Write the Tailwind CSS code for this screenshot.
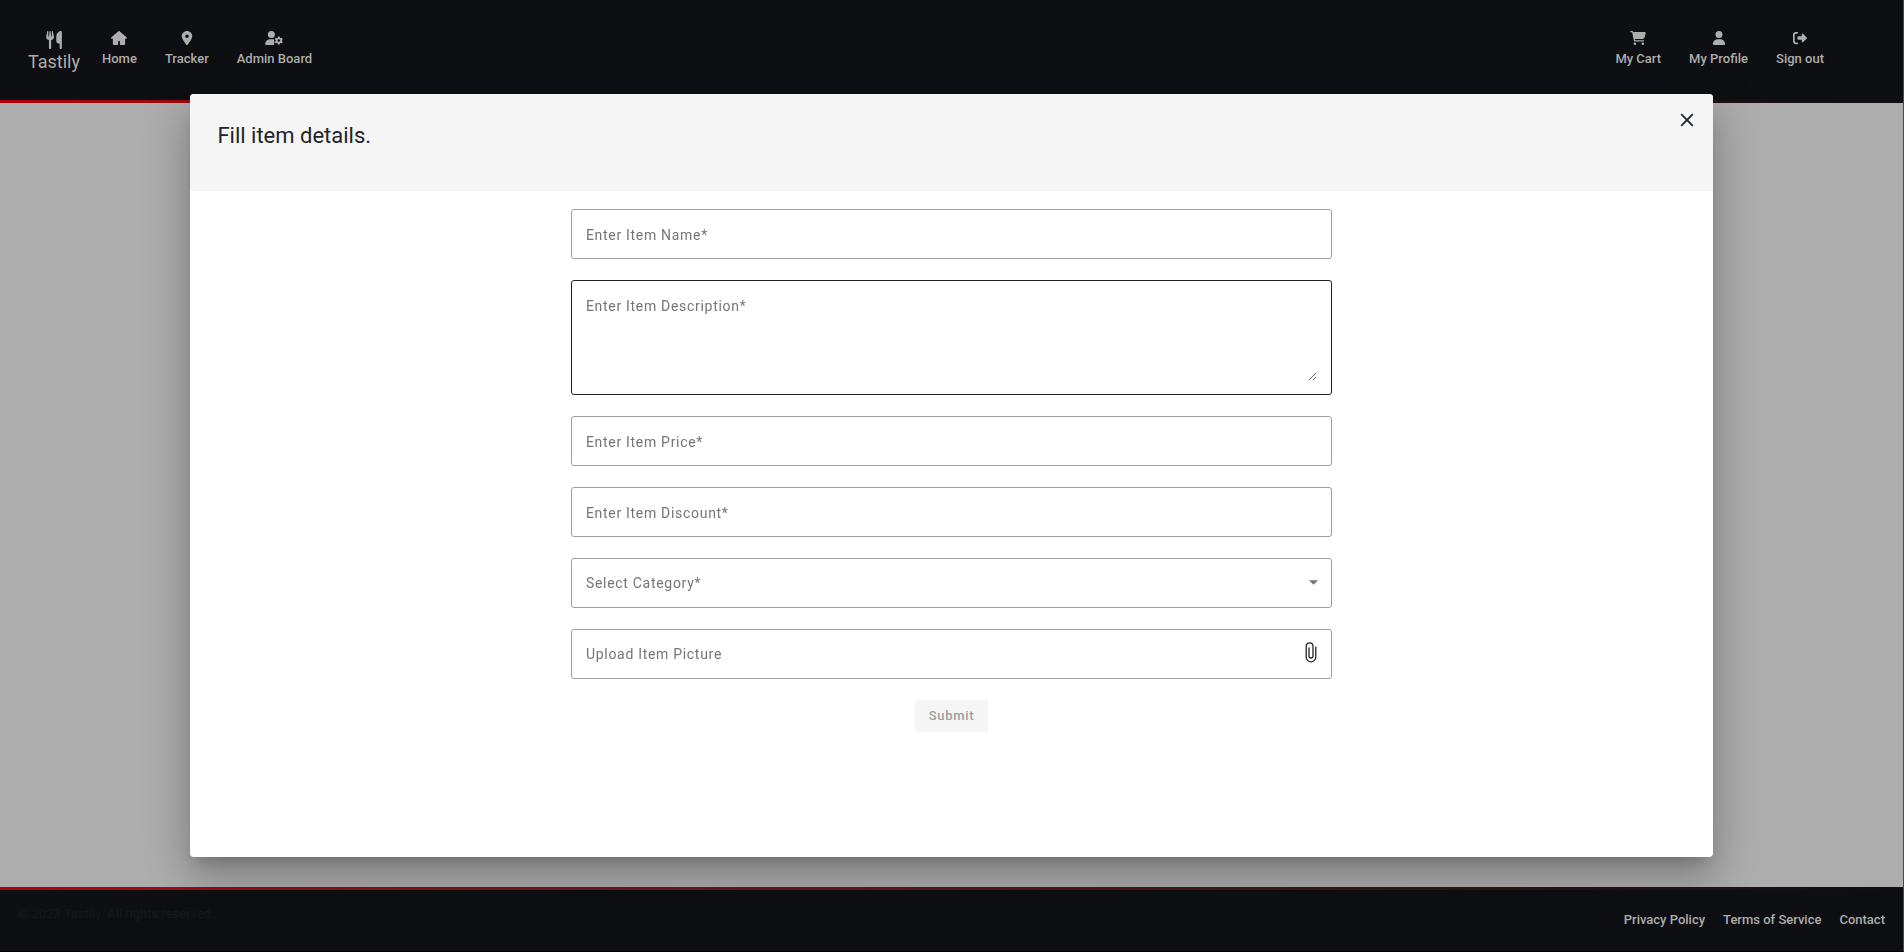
<!DOCTYPE html>
<html lang="en" class="h-full">
<head>
<meta charset="utf-8">
<meta name="viewport" content="width=device-width, initial-scale=1">
<title>Tastily</title>
<script src="https://cdn.jsdelivr.net/npm/@tailwindcss/browser@4"></script>
</head>
<body class="flex min-h-screen flex-col border-r border-b border-r-[#4a4a4a] border-b-black bg-[#adadad] font-[Roboto,sans-serif] text-[13px] font-medium text-[#adadad]">
<header>
  <nav class="flex h-[100px] items-start justify-between bg-[#0e0f12] pt-[29px] pr-[79px] pl-7" aria-label="Main">
    <div class="flex items-start">
      <a href="#" class="mr-[22px] flex flex-col items-center text-lg leading-[26px] font-normal">
        <svg class="mt-[2px] size-[18px]" viewBox="0 0 448 512" fill="currentColor" aria-hidden="true"><path d="M416 0C400 0 288 32 288 176v112c0 35.300 28.700 64 64 64h32v128c0 17.700 14.300 32 32 32s32-14.300 32-32V32c0-17.700-14.300-32-32-32zM64 16C64 7.800 57.900 1 49.700.1S34.200 4.600 32.400 12.500L2.100 148.800C.7 155.100 0 161.500 0 167.900c0 45.900 35.100 83.600 80 87.700V480c0 17.700 14.300 32 32 32s32-14.300 32-32V255.600c44.900-4.100 80-41.800 80-87.700 0-6.400-.7-12.800-2.100-19.100L191.600 12.500c-1.800-8-9.300-13.300-17.400-12.400S160 7.800 160 16v134.200c0 5.400-4.400 9.800-9.800 9.800-5.100 0-9.300-3.900-9.800-9L127.900 14.600C127.200 6.300 120.300 0 112 0s-15.200 6.300-15.900 14.600L83.700 151c-.5 5.100-4.700 9-9.800 9-5.400 0-9.800-4.400-9.800-9.800V16z"/></svg>
        <span>Tastily</span>
      </a>
      <ul class="flex gap-7">
        <li><a href="#" class="flex flex-col items-center gap-1 leading-5">
          <svg class="mt-[2px] h-[14px] w-4" viewBox="0 0 576 512" fill="currentColor" aria-hidden="true"><path d="M575.800 255.500c0 18-15 32.100-32 32.100h-32l.7 160.200c0 2.700-.2 5.400-.5 8.100V472c0 22.100-17.900 40-40 40H352c-17.700 0-32-14.300-32-32v-96c0-17.700-14.300-32-32-32s-32 14.300-32 32v96c0 17.700-14.300 32-32 32H104c-22.100 0-40-17.900-40-40V287.600H32c-18 0-32-14-32-32.100 0-9 3-17 10-24L266.400 8c7-7 15-8 22-8s15 2 21 7l255.400 224.500c8 7 12 15 11 24z"/></svg>
          <span>Home</span></a></li>
        <li><a href="#" class="flex flex-col items-center gap-1 leading-5">
          <svg class="mt-[2px] h-[14px] w-4" viewBox="0 0 384 512" fill="currentColor" aria-hidden="true"><path d="M215.700 499.200C267 435 384 279.400 384 192 384 86 298 0 192 0S0 86 0 192c0 87.400 117 243 168.300 307.200 12.300 15.300 35.100 15.300 47.400 0zM192 128a64 64 0 1 1 0 128 64 64 0 1 1 0-128z"/></svg>
          <span>Tracker</span></a></li>
        <li><a href="#" class="flex flex-col items-center gap-1 leading-5">
          <svg class="mt-[2px] h-[14px] w-[18px]" viewBox="0 0 640 512" fill="currentColor" aria-hidden="true"><path d="M224 0a128 128 0 1 1 0 256A128 128 0 1 1 224 0zM178.300 304h91.400c20.600 0 40.400 3.500 58.800 9.900-15 34-5 72 20 96-28 26-36 65-20 98l3 4H29.700C13.300 512 0 498.700 0 482.300 0 383.800 79.800 304 178.300 304z"/><path fill-rule="evenodd" d="M464 200h64l10 48 24 14 47-15 32 55-36 33v28l36 33-32 55-47-15-24 14-10 48h-64l-10-48-24-14-47 15-32-55 36-33v-28l-36-33 32-55 47 15 24-14zM496 301a48 48 0 1 0 0 96 48 48 0 1 0 0-96z"/></svg>
          <span>Admin Board</span></a></li>
      </ul>
    </div>
    <ul class="flex gap-7">
      <li><a href="#" class="flex flex-col items-center gap-1 leading-5">
        <svg class="mt-[2px] h-[14px] w-4" viewBox="0 0 576 512" fill="currentColor" aria-hidden="true"><path d="M0 24C0 10.700 10.700 0 24 0h45.500c22 0 41.500 12.800 50.600 32h411c26.300 0 45.500 25 38.600 50.400l-41 152.300c-8.500 31.400-37 53.300-69.500 53.300H170.700l5.400 28.500c2.200 11.300 12.100 19.500 23.600 19.500H488c13.300 0 24 10.700 24 24s-10.700 24-24 24H199.700c-34.600 0-64.300-24.600-70.700-58.500L77.400 54.500C76.700 50.700 73.400 48 69.500 48H24C10.700 48 0 37.300 0 24zm128 440a48 48 0 1 1 96 0 48 48 0 1 1-96 0zm336-48a48 48 0 1 1 0 96 48 48 0 1 1 0-96z"/></svg>
        <span>My Cart</span></a></li>
      <li><a href="#" class="flex flex-col items-center gap-1 leading-5">
        <svg class="mt-[2px] h-[14px] w-4" viewBox="0 0 448 512" fill="currentColor" aria-hidden="true"><path d="M224 256a128 128 0 1 0 0-256 128 128 0 1 0 0 256zm-45.700 48C79.800 304 0 383.800 0 482.300 0 498.700 13.300 512 29.700 512h388.600c16.400 0 29.700-13.300 29.700-29.700 0-98.500-79.800-178.300-178.300-178.300z"/></svg>
        <span>My Profile</span></a></li>
      <li><a href="#" class="flex flex-col items-center gap-1 leading-5">
        <svg class="mt-[2px] h-[14px] w-4" viewBox="0 0 512 512" fill="currentColor" aria-hidden="true"><path d="M502.600 278.600c12.500-12.500 12.500-32.800 0-45.300l-128-128c-9.200-9.200-22.900-11.900-34.900-6.900S320 115.100 320 128v64H192c-17.700 0-32 14.300-32 32v64c0 17.700 14.300 32 32 32h128v64c0 12.900 7.800 24.600 19.800 29.600s25.700 2.200 34.900-6.900zM160 96c17.700 0 32-14.300 32-32s-14.300-32-32-32H96C43 32 0 75 0 128v256c0 53 43 96 96 96h64c17.700 0 32-14.300 32-32s-14.300-32-32-32H96c-17.700 0-32-14.300-32-32V128c0-17.700 14.300-32 32-32z"/></svg>
        <span>Sign out</span></a></li>
    </ul>
  </nav>
  <div class="h-[3px] bg-linear-to-r from-[#ad0010] to-[#0e0f12]"></div>
</header>

<main class="flex-1"></main>

<footer>
  <div class="h-[3px] bg-linear-to-r from-[#ad0010] to-[#0e0f12]"></div>
  <div class="flex h-[61px] items-start justify-between bg-[#0e0f12] px-[18px] pt-[14px]">
    <p class="leading-5 font-normal text-[#17181c]">© 2023 Tastily. All rights reserved.</p>
    <nav class="flex gap-[18px] pt-[6px] leading-5" aria-label="Legal">
      <a href="#">Privacy Policy</a>
      <a href="#">Terms of Service</a>
      <a href="#">Contact</a>
    </nav>
  </div>
</footer>

<!-- Item dialog -->
<div class="fixed top-0 right-px bottom-px left-0 flex px-[10%] py-[94px]">
  <section role="dialog" aria-modal="true" aria-labelledby="dialog-title" class="flex w-full flex-col overflow-auto rounded-[4px] bg-white text-[#212529] shadow-[0_11px_15px_-7px_rgba(0,0,0,0.2),0_24px_38px_3px_rgba(0,0,0,0.14),0_9px_46px_8px_rgba(0,0,0,0.12)]">
    <header class="flex h-[97px] shrink-0 items-start justify-between bg-[#f5f5f5] pt-[14px] pr-[14px] pl-[27px]">
      <h1 id="dialog-title" class="pt-3 text-[22px] leading-8 font-normal">Fill item details.</h1>
      <button type="button" aria-label="Close" class="flex size-6 items-center justify-center">
        <svg class="size-[14px] shrink-0" viewBox="0 0 14 14" fill="none" stroke="currentColor" stroke-width="1.800" aria-hidden="true"><path d="M1.200 1.200l11.600 11.600M12.800 1.200L1.200 12.800"/></svg>
      </button>
    </header>
    <form class="mx-auto flex w-1/2 flex-col gap-[21px] pt-[18px] text-sm font-normal tracking-wider">
      <input aria-label="Item name" required placeholder="Enter Item Name*" class="h-[50px] rounded-[3px] border border-[#9e9e9e] px-[14px] pt-[2px] placeholder:text-[#757575]">
      <div class="flex h-[115px] rounded-[3px] border border-[#212121] px-[14px] py-[13px]">
        <textarea aria-label="Item description" required placeholder="Enter Item Description*" class="w-full resize-y leading-6 outline-none placeholder:text-[#757575]"></textarea>
      </div>
      <input aria-label="Item price" required placeholder="Enter Item Price*" class="h-[50px] rounded-[3px] border border-[#9e9e9e] px-[14px] pt-[2px] placeholder:text-[#757575]">
      <input aria-label="Item discount" required placeholder="Enter Item Discount*" class="h-[50px] rounded-[3px] border border-[#9e9e9e] px-[14px] pt-[2px] placeholder:text-[#757575]">
      <div class="relative">
        <select aria-label="Category" required class="h-[50px] w-full appearance-none rounded-[3px] border border-[#9e9e9e] px-[14px] tracking-wider text-[#757575]"><option>Select Category*</option></select>
        <svg class="pointer-events-none absolute top-[22px] right-[14px] h-[5px] w-[9px]" viewBox="0 0 10 5" fill="#757575" aria-hidden="true"><path d="M0 0h10L5 5z"/></svg>
      </div>
      <div class="flex h-[50px] items-center rounded-[3px] border border-[#9e9e9e] px-[14px]">
        <input aria-label="Item picture" readonly placeholder="Upload Item Picture" class="min-w-0 flex-1 placeholder:text-[#757575]">
        <button type="button" aria-label="Choose file" class="pb-1">
          <svg class="h-[21px] w-3" viewBox="0 0 12 21" fill="none" stroke="currentColor" stroke-width="1.300" aria-hidden="true"><path d="M10.800 4.500V15a4.800 4.800 0 0 1-9.600 0V4.200a3.400 3.400 0 0 1 6.800 0V14a2 2 0 0 1-4 0V5.500"/></svg>
        </button>
      </div>
      <button type="submit" disabled class="h-8 self-center rounded-[3px] bg-[#f5f5f5] px-[14px] text-[13px] font-medium tracking-wider text-[#9e9e9e]">Submit</button>
    </form>
  </section>
</div>
</body>
</html>
